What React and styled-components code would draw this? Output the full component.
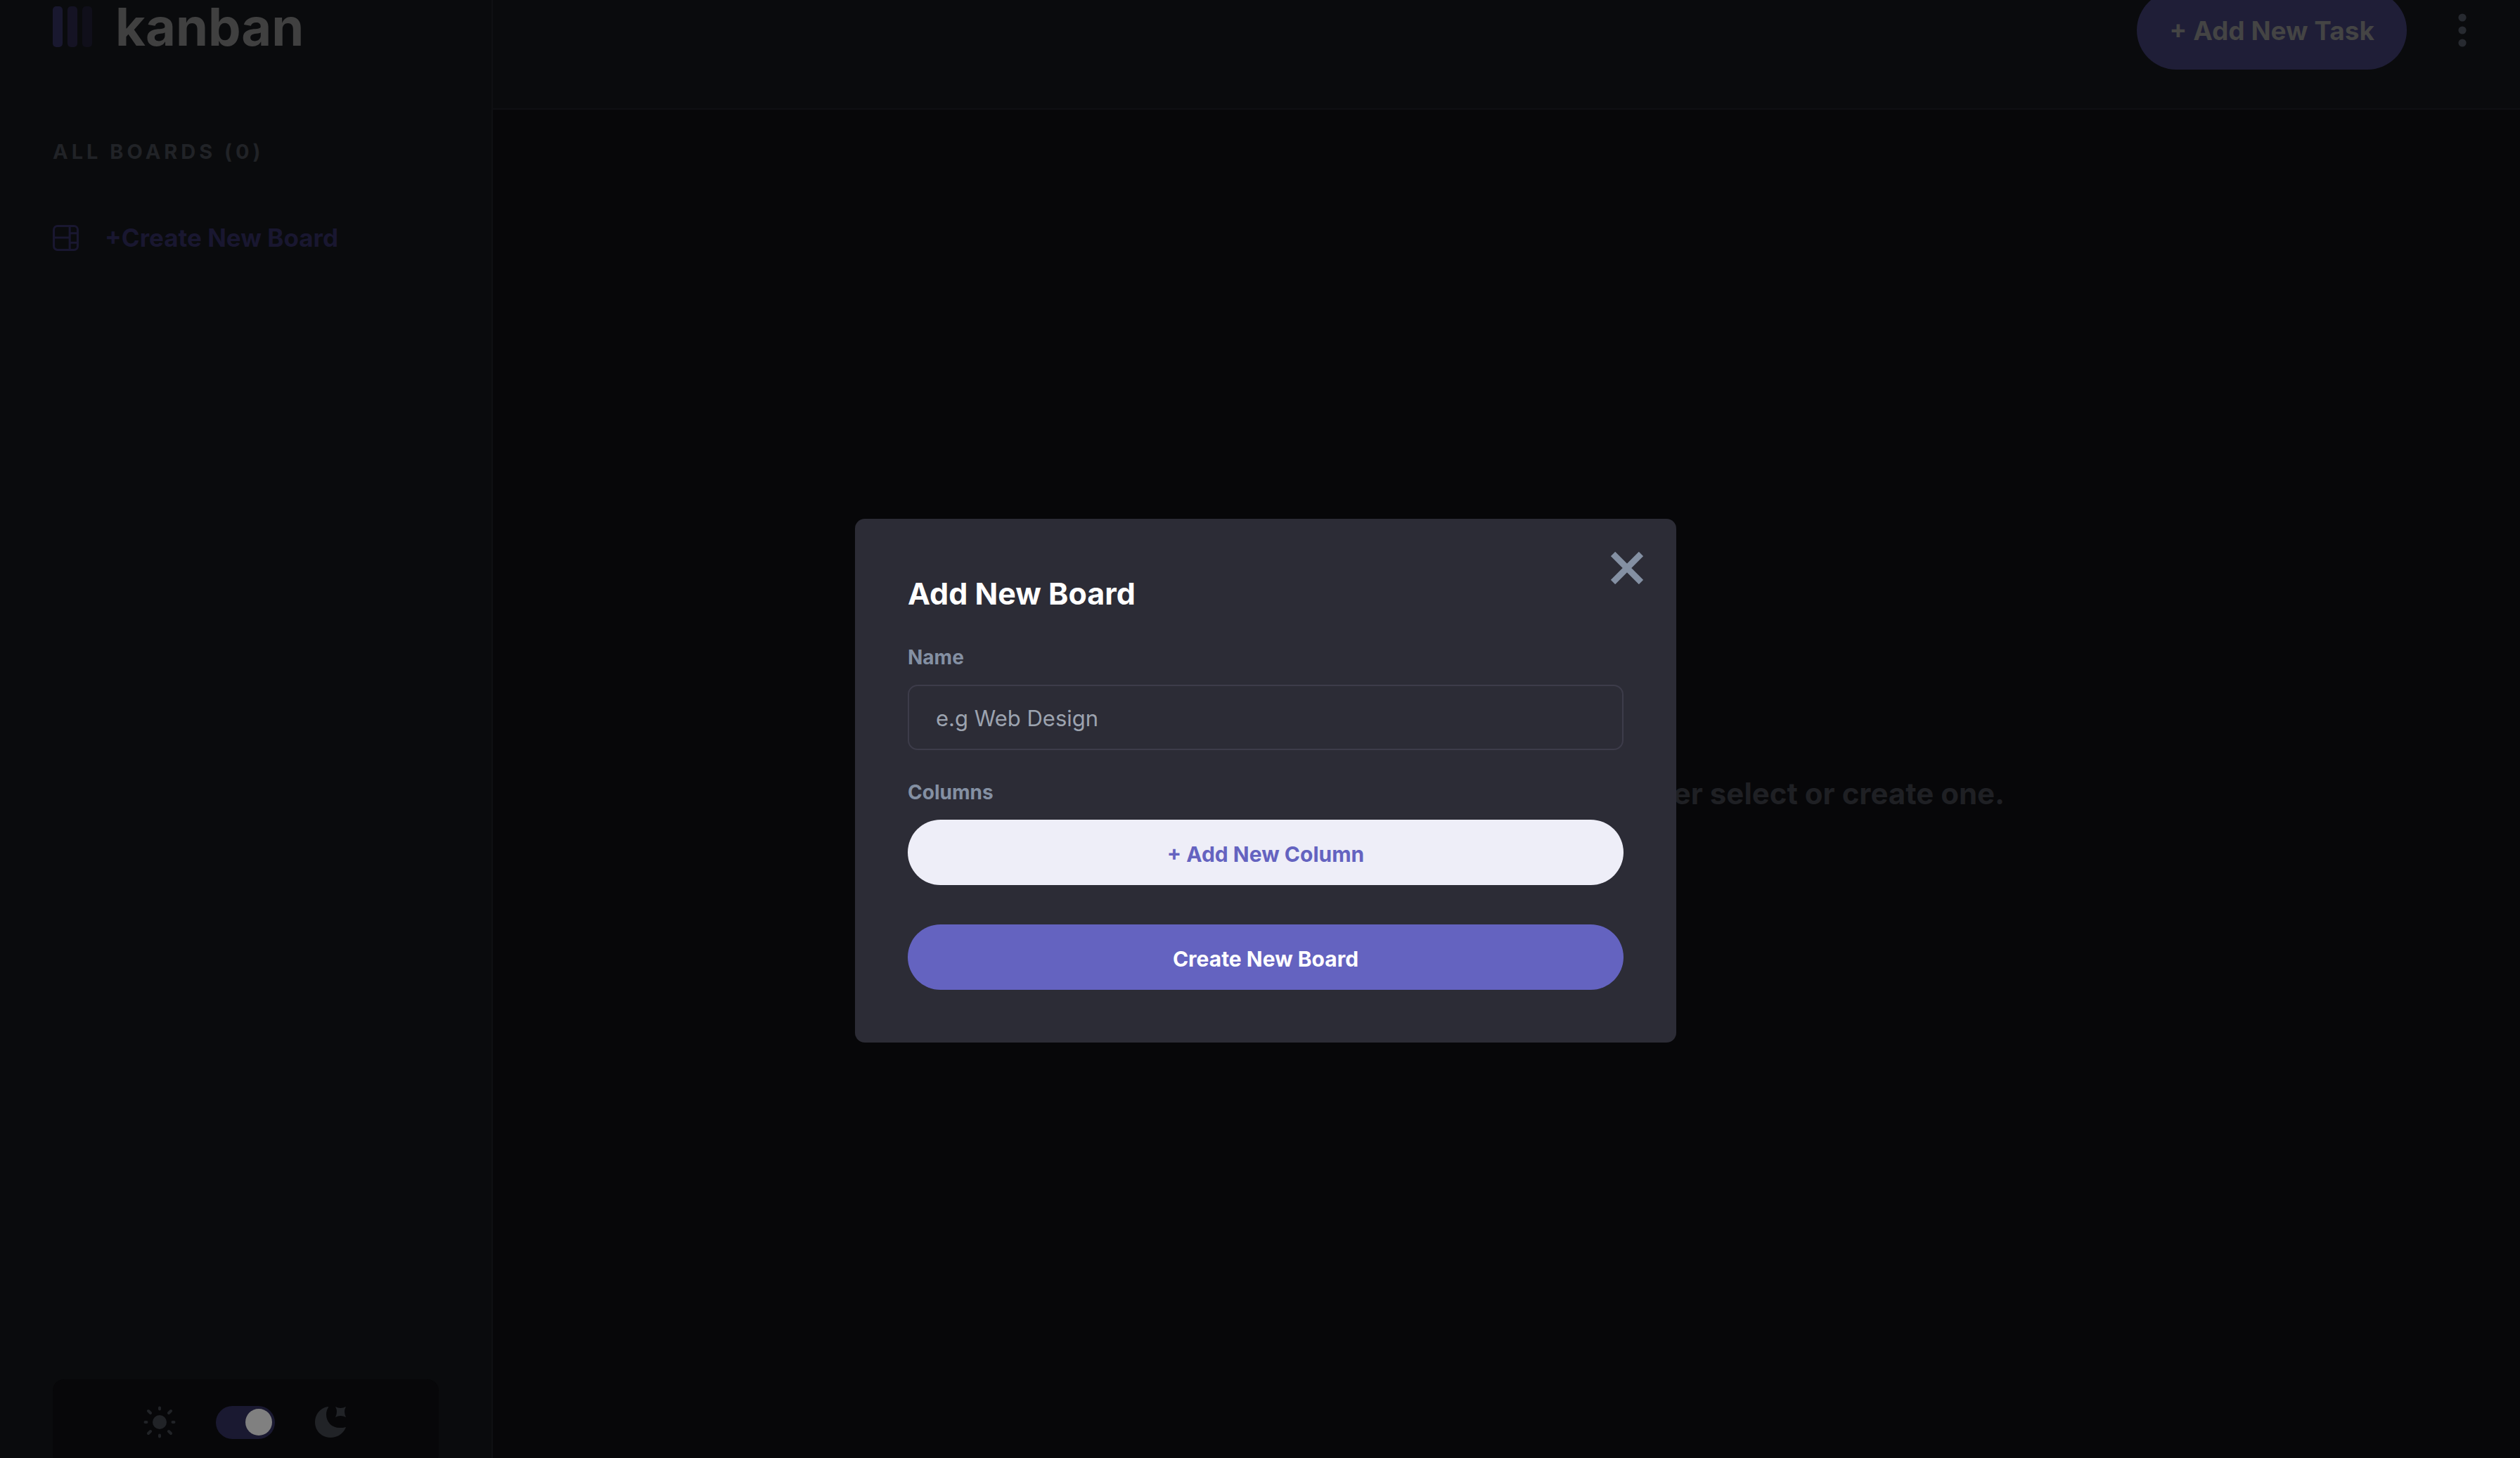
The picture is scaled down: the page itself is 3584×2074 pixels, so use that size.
import React, { useState } from "react";
import styled, { createGlobalStyle, css } from "styled-components";

const Global = createGlobalStyle`
  *, *::before, *::after { box-sizing: border-box; }
  body {
    margin: 0;
    overflow: hidden;
    background: #070709;
    font-family: Inter, "Liberation Sans", sans-serif;
    font-weight: 700;
  }
  h1, h2, p { margin: 0; }
  button, input { font-family: inherit; }
`;

const Viewport = styled.div`
  height: 100vh;
  overflow: hidden;
`;

/* The page behind the dialog is scrolled down a little. */
const Shell = styled.div`
  display: flex;
  margin-top: -68px;
  height: calc(100vh + 78px);
`;

const Sidebar = styled.aside`
  flex: 0 0 701px;
  display: flex;
  flex-direction: column;
  padding: 76px 75px 0;
  background: #0a0b0d;
  border-right: 2px solid #0f1013;
`;

const Brand = styled.a`
  display: flex;
  align-items: center;
  gap: 32px;
  height: 60px;
  color: #404040;
  text-decoration: none;
  font-size: 74px;
  line-height: 60px;
`;

const SectionTitle = styled.h2`
  margin-top: 130px;
  color: #212327;
  font-size: 29px;
  line-height: 36px;
  letter-spacing: 5px;
`;

const BoardButton = styled.button`
  display: flex;
  align-items: center;
  gap: 37px;
  margin-top: 82px;
  padding: 0;
  border: 0;
  background: none;
  color: #191730;
  font-size: 35px;
  font-weight: 700;
  line-height: 44px;
`;

const ThemePanel = styled.div`
  display: flex;
  align-items: center;
  justify-content: center;
  gap: 57px;
  height: 122px;
  margin-top: auto;
  padding-right: 3px;
  border-radius: 16px;
  background: #070709;
  color: #212327;
`;

const ThemeSwitch = styled.input`
  appearance: none;
  display: flex;
  align-items: center;
  width: 84px;
  height: 47px;
  margin: 0;
  padding: 0 4px;
  border-radius: 24px;
  background: #1a1931;
  &::before {
    content: "";
    width: 38px;
    height: 38px;
    border-radius: 50%;
    background: #808080;
  }
  &:checked::before { margin-left: auto; }
`;

const Content = styled.div`
  flex: 1;
  min-width: 0;
  display: flex;
  flex-direction: column;
`;

const Header = styled.header`
  display: flex;
  align-items: center;
  justify-content: flex-end;
  gap: 61px;
  flex: 0 0 224px;
  padding-right: 64px;
  background: #0a0b0d;
  border-bottom: 2px solid #0f1013;
`;

const pill = css`
  border: 0;
  font-weight: 700;
  text-align: center;
  white-space: nowrap;
`;

const AddTask = styled.button`
  ${pill}
  height: 112px;
  padding: 0 46px;
  border-radius: 56px;
  background: #1f1e37;
  color: #444444;
  font-size: 37px;
`;

const MenuButton = styled.button`
  display: flex;
  padding: 0 12px;
  border: 0;
  background: none;
  color: #272a30;
`;

const Main = styled.main`
  flex: 1;
  display: flex;
  align-items: center;
  justify-content: center;
  padding: 18px 0 0 20px;
  color: #1f2024;
  font-size: 42px;
  line-height: 56px;
`;

const Overlay = styled.div`
  position: fixed;
  inset: 0;
  display: flex;
  align-items: center;
  justify-content: center;
  padding: 147px 0 0 16px;
`;

const Dialog = styled.form`
  position: relative;
  display: flex;
  flex-direction: column;
  width: 1168px;
  padding: 75px;
  border-radius: 14px;
  background: #2c2c36;
`;

const DialogTitle = styled.h1`
  color: #ffffff;
  font-size: 43px;
  line-height: 62px;
`;

const Close = styled.button`
  position: absolute;
  top: 47px;
  right: 47px;
  display: flex;
  padding: 0;
  border: 0;
  background: none;
  color: #8490a3;
`;

const Label = styled.label`
  margin-top: 40px;
  color: #8490a3;
  font-size: 28px;
  line-height: 40px;
`;

const NameInput = styled.input`
  height: 93px;
  margin-top: 19px;
  padding: 2px 38px 0;
  border: 2px solid #3d3c4a;
  border-radius: 14px;
  outline: 0;
  background: transparent;
  color: #ffffff;
  font-size: 31px;
  font-weight: 400;
  &::placeholder { color: #9ca3af; opacity: 1; }
`;

const WideButton = styled.button`
  ${pill}
  height: 93px;
  margin-top: ${(p) => p.$top}px;
  padding: 4px 0 0;
  border-radius: 47px;
  background: ${(p) => (p.$primary ? "#6463c0" : "#eeeef8")};
  color: ${(p) => (p.$primary ? "#ffffff" : "#6463c0")};
  font-size: 30px;
`;

const Logo = () => (
  <svg width="57" height="58" viewBox="0 0 57 58" aria-hidden="true">
    <rect width="14" height="58" rx="5" fill="#19182f" />
    <rect x="21" width="14" height="58" rx="5" fill="#151324" />
    <rect x="42" width="14" height="58" rx="5" fill="#100f1a" />
  </svg>
);

const BoardIcon = () => (
  <svg width="37" height="37" viewBox="0 0 16 16" fill="currentColor" aria-hidden="true">
    <path d="M0 2.889A2.889 2.889 0 0 1 2.889 0H13.11A2.889 2.889 0 0 1 16 2.889V13.11A2.888 2.888 0 0 1 13.111 16H2.89A2.889 2.889 0 0 1 0 13.111V2.89Zm1.333 5.555v4.667c0 .859.697 1.556 1.556 1.556h6.889V8.444H1.333Zm8.445-1.333V1.333h-6.89A1.556 1.556 0 0 0 1.334 2.89V7.11h8.445Zm4.889-1.333H11.11v4.444h3.556V5.778Zm0 5.778H11.11v3.11h2a1.556 1.556 0 0 0 1.556-1.555v-1.555Zm0-7.112V2.89a1.555 1.555 0 0 0-1.556-1.556h-2v3.111h3.556Z" />
  </svg>
);

const SunIcon = () => (
  <svg width="46" height="46" viewBox="0 0 46 46" aria-hidden="true">
    <circle cx="23" cy="23" r="10" fill="currentColor" />
    <g stroke="currentColor" strokeWidth="4" strokeLinecap="round">
      <path d="M23 2.500v2M23 41.500v2M2.500 23h2M41.500 23h2M7 7l3 3M36 36l3 3M39 7l-3 3M10 36l-3 3" />
    </g>
  </svg>
);

const MoonIcon = () => (
  <svg width="44" height="46" viewBox="0 0 44 46" fill="currentColor" aria-hidden="true">
    <path d="M18 1C7 3 0 12 0 23c0 13 10 22 22 22 10 0 19-6 22-15-3 1-6 1-9 1C24 31 16 23 16 12c0-4 1-7 3-10 0-1 0-1-1-1Z" />
    <path d="M29 1q7 4 15 0q-4 7 0 15q-8-4-15 0q4-8 0-15Z" />
  </svg>
);

const DotsIcon = () => (
  <svg width="12" height="48" viewBox="0 0 12 48" fill="currentColor" aria-hidden="true">
    <circle cx="6" cy="6" r="5.600" />
    <circle cx="6" cy="24" r="5.600" />
    <circle cx="6" cy="42" r="5.600" />
  </svg>
);

const CloseIcon = () => (
  <svg width="46" height="46" viewBox="0 0 46 46" aria-hidden="true">
    <path d="M3 3 43 43M43 3 3 43" stroke="currentColor" strokeWidth="9" />
  </svg>
);

export default function App() {
  const [name, setName] = useState("");
  const [dark, setDark] = useState(true);
  return (
    <Viewport>
      <Global />
      <Shell>
        <Sidebar>
          <Brand href="#">
            <Logo />
            kanban
          </Brand>
          <SectionTitle>ALL BOARDS (0)</SectionTitle>
          <BoardButton type="button">
            <BoardIcon />
            +Create New Board
          </BoardButton>
          <ThemePanel>
            <SunIcon />
            <ThemeSwitch
              type="checkbox"
              role="switch"
              aria-label="Dark theme"
              checked={dark}
              onChange={(e) => setDark(e.target.checked)}
            />
            <MoonIcon />
          </ThemePanel>
        </Sidebar>
        <Content>
          <Header>
            <AddTask type="button">+ Add New Task</AddTask>
            <MenuButton type="button" aria-label="Board menu">
              <DotsIcon />
            </MenuButton>
          </Header>
          <Main>
            <p>There are no boards available yet. Please either select or create one.</p>
          </Main>
        </Content>
      </Shell>
      <Overlay>
        <Dialog role="dialog" aria-labelledby="dialog-title" onSubmit={(e) => e.preventDefault()}>
          <Close type="button" aria-label="Close">
            <CloseIcon />
          </Close>
          <DialogTitle id="dialog-title">Add New Board</DialogTitle>
          <Label htmlFor="board-name">Name</Label>
          <NameInput
            id="board-name"
            placeholder="e.g Web Design"
            value={name}
            onChange={(e) => setName(e.target.value)}
          />
          <Label htmlFor="add-column">Columns</Label>
          <WideButton id="add-column" type="button" $top={19}>+ Add New Column</WideButton>
          <WideButton type="submit" $primary $top={56}>Create New Board</WideButton>
        </Dialog>
      </Overlay>
    </Viewport>
  );
}
